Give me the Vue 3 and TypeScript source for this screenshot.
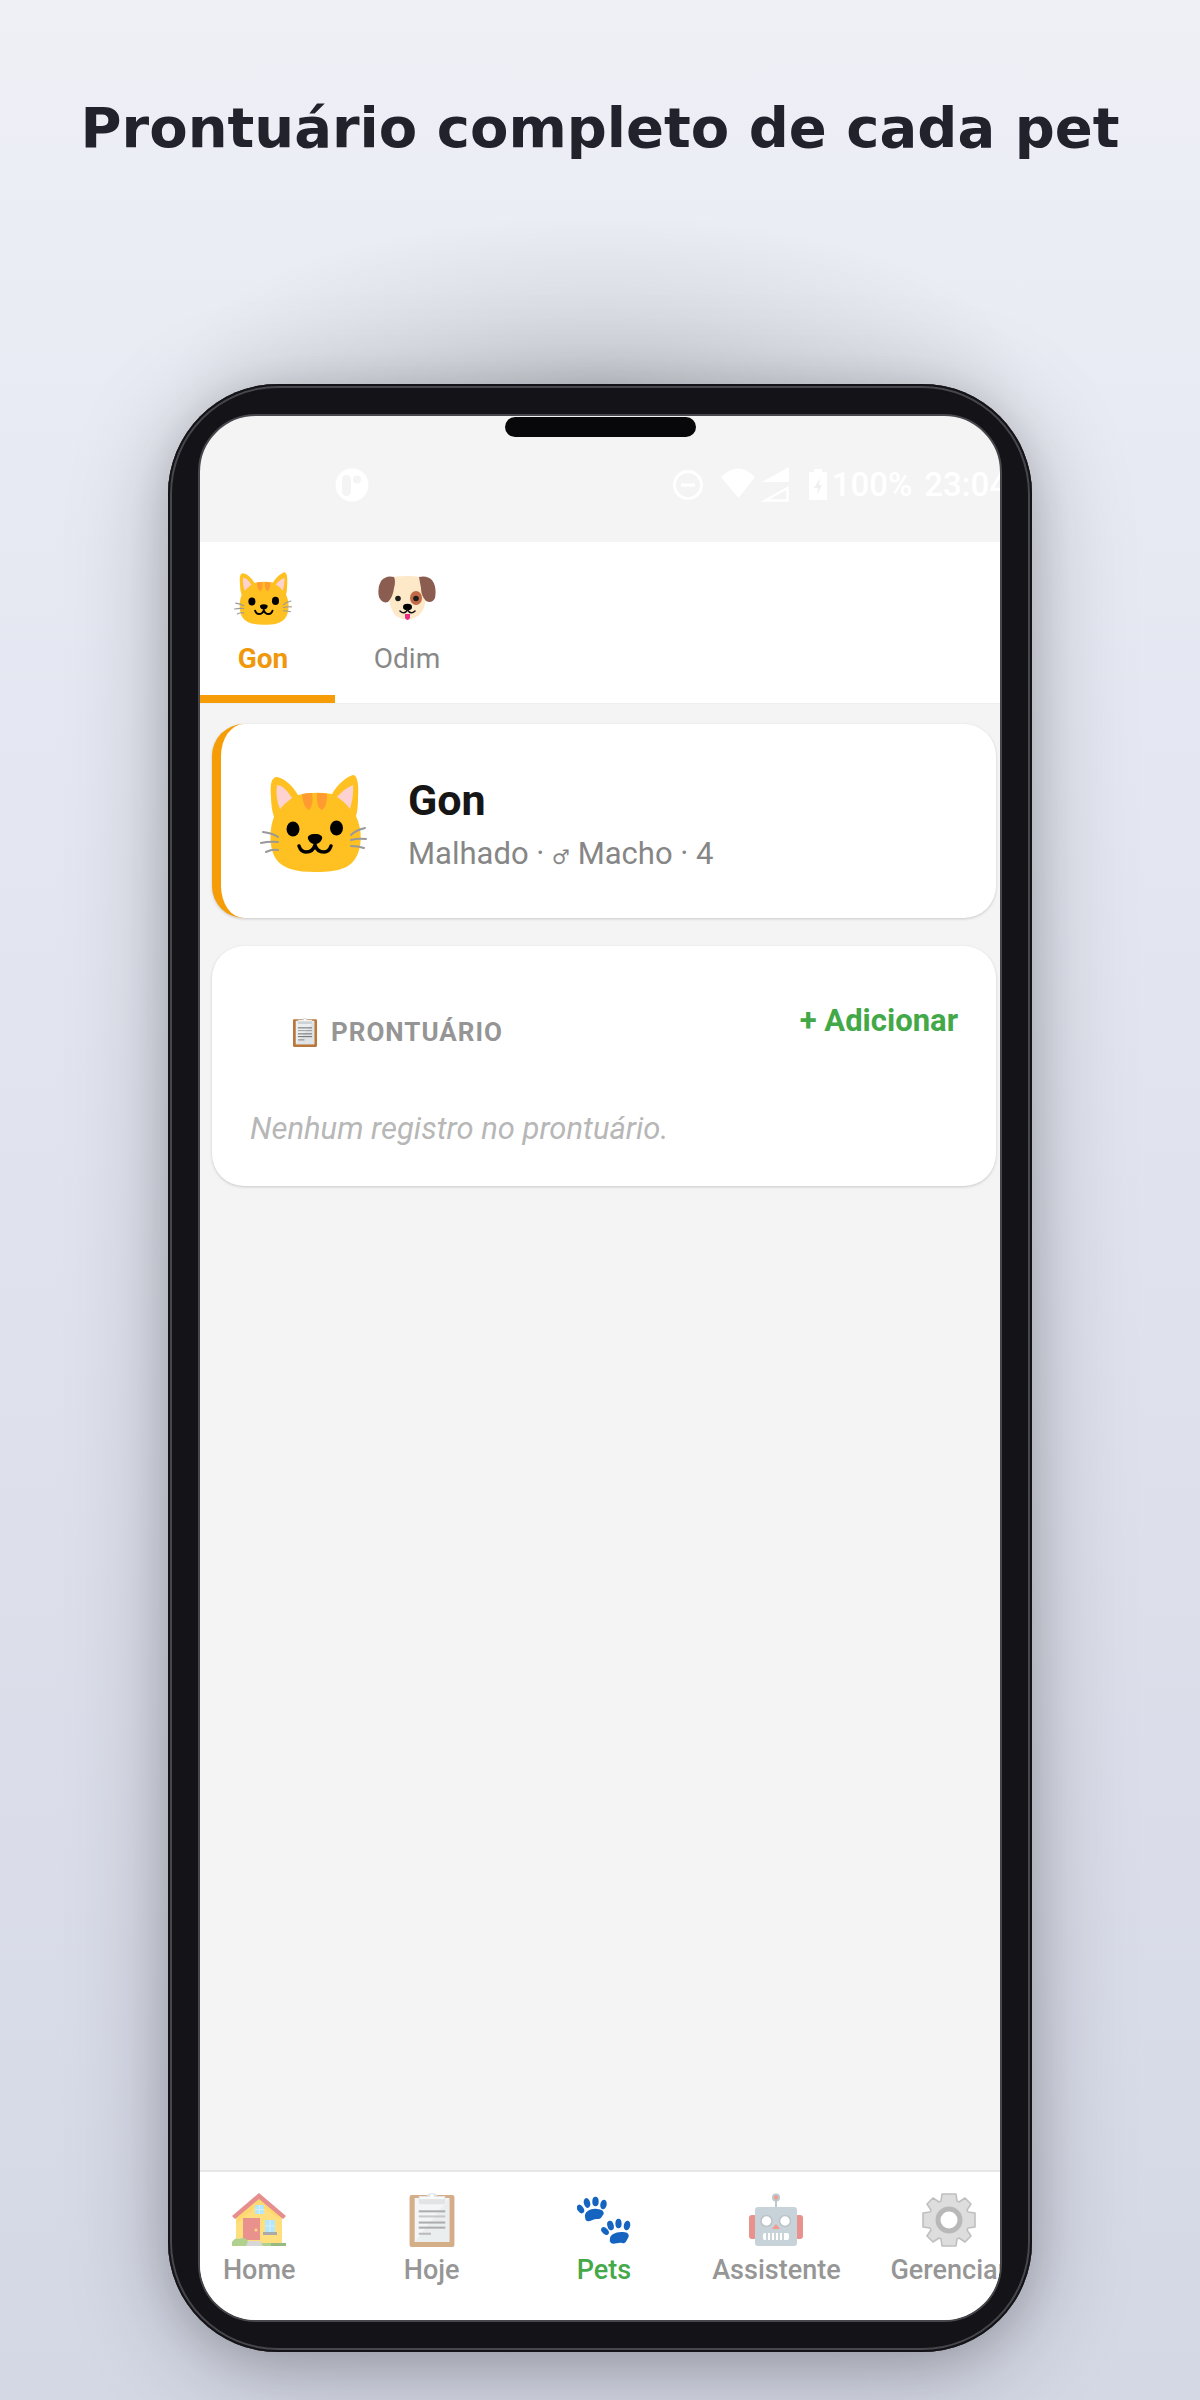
<script setup lang="ts">
import { ref } from 'vue'

interface Pet {
  name: string
  kind: 'cat' | 'dog'
}

interface NavItem {
  id: string
  label: string
}

const pets: Pet[] = [
  { name: 'Gon', kind: 'cat' },
  { name: 'Odim', kind: 'dog' },
]
const navItems: NavItem[] = [
  { id: 'home', label: 'Home' },
  { id: 'today', label: 'Hoje' },
  { id: 'pets', label: 'Pets' },
  { id: 'assistant', label: 'Assistente' },
  { id: 'manage', label: 'Gerenciar' },
]
const activePet = ref('Gon')
const activeNav = ref('pets')
</script>

<template>
  <svg class="symbols" aria-hidden="true">
    <symbol id="cat" viewBox="0 0 107 97">
      <path d="M11 22C10 10 11 2 17 2C24 3 33 11 38 20Q55 16 72 19C77 10 86 2 93 0C98 0 99 12 98 24Q98 35 96 41C103 56 102 74 95 84C88 95 73 97 55 97C37 97 23 94 16 84C9 74 9 54 14 42Q11 33 11 22Z" fill="#ffc022" />
      <path d="M17 10Q24 10 32 23Q25 28 20 34Q15 22 17 10ZM93 10Q85 13 77 22Q84 26 90 34Q94 20 93 10Z" fill="#ffd2d2" />
      <path d="M42 19Q47 18 52 18Q54 30 49 35Q43 33 42 19ZM57 18Q62 18 67 19Q67 32 62 35Q56 33 57 18Z" fill="#ff9b30" />
      <g fill="none" stroke="#999" stroke-width="2" stroke-linecap="round">
        <path d="M3 57Q12 58 18 62M1 68Q10 66 18 67M6 77Q12 74 18 75M105 53Q96 55 91 60M106 64Q98 63 91 65M104 73Q98 71 91 71" />
      </g>
      <ellipse cx="33" cy="54" rx="6.5" ry="7.5" />
      <ellipse cx="76.5" cy="53" rx="6.5" ry="7.5" />
      <path d="M55 59C60 59 63 61 62 64Q60 69 55 69Q50 69 48 64C47 61 50 59 55 59Z" />
      <path d="M39 71Q41 77 46 77Q53 77 55 70Q57 77 64 77Q69 77 71 71" fill="none" stroke="#000" stroke-width="3.5" stroke-linecap="round" />
    </symbol>
    <symbol id="dog" viewBox="0 0 58 45">
      <path d="M14 1Q29 -1 43 1L48 18Q48 34 40 40Q29 47 18 40Q11 32 11 20Z" fill="#fde9c8" />
      <path d="M16 1Q8 -1 3 5Q-1 12 1 21Q4 28 10 26Q15 21 16 12Q18 5 16 1ZM41 1Q49 -1 54 4Q59 11 57 22Q54 28 48 25Q43 20 43 12Q42 7 41 1Z" fill="#8b5d50" />
      <ellipse cx="38" cy="22" rx="6" ry="7" fill="#c26a45" />
      <circle cx="20" cy="22.5" r="2.8" fill="#1c1c1c" />
      <circle cx="38" cy="22.5" r="2.8" fill="#1c1c1c" />
      <path d="M27 38H32V42Q29.5 46 27 42Z" fill="#ec2a86" />
      <ellipse cx="29.5" cy="31" rx="4.5" ry="3.2" />
      <path d="M22 35Q26 39 29.5 34Q33 39 37 35" fill="none" stroke="#111" stroke-width="1.6" stroke-linecap="round" />
    </symbol>
    <symbol id="clipboard" viewBox="0 0 44 53">
      <rect x="0" y="2" width="44" height="51" rx="2" fill="#b9773b" />
      <path d="M5 5H39V48H5Z" fill="#eceff1" />
      <path d="M39 5V48H5Z" fill="#dfe3e6" />
      <path d="M9 3H17Q18 0 22 0Q26 0 27 3H35V9Q35 11 33 11H11Q9 11 9 9Z" fill="#cfd2d4" />
      <path d="M10 4H34V6H10Z" fill="#f6f7f8" />
      <circle cx="22" cy="3" r="2" fill="#fff" />
      <g fill="#777">
        <rect x="9" y="17" width="26" height="2" />
        <rect x="9" y="22" width="26" height="2" opacity=".6" />
        <rect x="9" y="28" width="26" height="2" />
        <rect x="9" y="33" width="26" height="2" />
        <rect x="9" y="39" width="12" height="2" opacity=".8" />
      </g>
    </symbol>
    <symbol id="home" viewBox="0 0 54 54">
      <path d="M4 24L27 4L50 24V51H4Z" fill="#ffca28" />
      <path d="M27 5L47 22V26L27 11L5 30V24Z" fill="#ffb300" opacity=".5" />
      <path d="M27 0L54 23L51 26L27 6L3 26L0 23Z" fill="#d64444" />
      <rect x="11" y="25" width="17" height="22" fill="#dc4a43" />
      <circle cx="24" cy="37" r="1.5" fill="#ffca28" />
      <path d="M23 12H32V21H23ZM33 27H43V40H33Z" fill="#81d4fa" />
      <path d="M27.5 12V21M23 16.5H32M38 27V40M33 33H43" stroke="#b5e7fc" stroke-width="1" />
      <rect x="31" y="39" width="14" height="3" fill="#6f7376" />
      <path d="M0 53V49Q3 44 7 46Q13 43 16 48V50H54V53Z" fill="#7cb342" />
      <path d="M39 50H54V53H39Z" fill="#558b2f" />
      <path d="M16 48H28L31 53H14Z" fill="#bdbdbd" />
    </symbol>
    <symbol id="pets" viewBox="0 0 54 54">
      <g fill="#1565c0">
        <path d="M8 24C7 18 15 15 20 16C26 16 28 20 26 22C24 24 25 26 20 26C16 26 14 29 10 28Q8 27 8 24Z" />
        <ellipse cx="3.5" cy="16" rx="3" ry="4.7" transform="rotate(-35 3.5 16)" />
        <ellipse cx="10" cy="10" rx="3.2" ry="5" transform="rotate(-15 10 10)" />
        <ellipse cx="18.5" cy="8.5" rx="3.2" ry="4.7" />
        <ellipse cx="26.5" cy="11.500" rx="3.2" ry="4.9" transform="rotate(10 26.5 11.5)" />
        <path d="M33 45C34 40 41 39 46 39C51 39 53 42 51 45C49 48 49 51 45 50C41 49 37 52 34 50Q32 48 33 45Z" />
        <ellipse cx="28" cy="38" rx="3" ry="4.5" transform="rotate(-45 28 38)" />
        <ellipse cx="33.5" cy="32.5" rx="3.2" ry="4.8" transform="rotate(-15 33.5 32.5)" />
        <ellipse cx="41.5" cy="30.5" rx="3.1" ry="4.7" />
        <ellipse cx="50" cy="32.5" rx="3.2" ry="4.9" transform="rotate(10 50 32.5)" />
      </g>
    </symbol>
    <symbol id="assistant" viewBox="0 0 54 54">
      <path d="M27 5V16" stroke="#90a4ae" stroke-width="2" />
      <circle cx="27" cy="4.5" r="4" fill="#90a4ae" />
      <circle cx="27" cy="4.5" r="2" fill="#f05545" />
      <rect x="0" y="22" width="8" height="24" rx="3" fill="#dc4a43" />
      <rect x="46" y="22" width="8" height="24" rx="3" fill="#dc4a43" />
      <rect x="6" y="14" width="42" height="39" rx="3" fill="#a4b7c0" />
      <circle cx="17.5" cy="28" r="5.5" fill="#fff" stroke="#8c9ea7" stroke-width="1.5" />
      <circle cx="36" cy="28" r="5.5" fill="#fff" stroke="#8c9ea7" stroke-width="1.5" />
      <path d="M27 31L31 36H23Z" fill="#f05545" />
      <rect x="14" y="40" width="26" height="7" rx="2" fill="#fff" />
      <path d="M18 40V47M22 40V47M26 40V47M30 40V47M34 40V47" stroke="#8c9ea7" stroke-width="1.5" />
    </symbol>
    <symbol id="manage" viewBox="0 0 54 54">
      <path
        d="M19 8L20 1H34L35 8L37 9L43 5L49 11L45 17L46 19L53 20V34L46 35L45 37L49 43L43 49L37 45L35 46L34 53H20L19 46L17 45L11 49L5 43L9 37L8 35L1 34V20L8 19L9 17L5 11L11 5L17 9Z"
        fill="#c8c8c8"
        stroke="#969696"
        stroke-width="1.6"
        stroke-linejoin="round"
      />
      <circle cx="27" cy="27" r="11" fill="#fff" stroke="#8a8a8a" stroke-width="5" />
    </symbol>
  </svg>

  <main class="page">
    <h1 class="headline">Prontuário completo de cada pet</h1>

    <section class="phone">
      <div class="screen">
        <span class="notch"></span>

        <div class="status">
          <svg class="status-app" width="34" height="34" viewBox="0 0 34 34">
            <circle cx="17" cy="17" r="16.5" fill="#fff" />
            <rect x="7" y="7" width="9" height="21" rx="4.5" fill="#f4f4f4" />
            <circle cx="22" cy="11.5" r="4" fill="#f4f4f4" />
          </svg>
          <svg width="30" height="30" viewBox="0 0 30 30">
            <circle cx="15" cy="15" r="13.5" fill="none" stroke="#fff" stroke-width="3" />
            <path d="M8 15H22" stroke="#fff" stroke-width="3" />
          </svg>
          <svg class="status-wifi" width="68" height="36" viewBox="0 0 68 36" fill="#fff">
            <path d="M0 10Q17 -7 34 10L17.5 31Z" />
            <path d="M41 15L68 0V15Z" />
            <path d="M44 33.5L66.5 21V33.5Z" fill="none" stroke="#fff" stroke-width="2.5" />
          </svg>
          <svg class="status-battery" width="18" height="32" viewBox="0 0 18 32">
            <path d="M5 0H13V3H18V31H0V3H5Z" fill="#fff" />
            <path d="M11 9L5 19H9L8 26L13 16H10Z" fill="#f0f0f0" />
          </svg>
          <span class="status-level">100%</span>
          <time>23:04</time>
        </div>

        <div class="tabs" role="tablist">
          <button
            v-for="pet in pets"
            :key="pet.name"
            type="button"
            role="tab"
            class="tab"
            :class="{ active: pet.name === activePet }"
            :aria-selected="pet.name === activePet"
            @click="activePet = pet.name"
          >
            <svg width="58" height="53"><use :href="'#' + pet.kind" /></svg>
            <span>{{ pet.name }}</span>
          </button>
        </div>

        <div class="content">
          <article class="card profile">
            <svg width="107" height="97"><use href="#cat" /></svg>
            <div>
              <h2 class="pet-name">Gon</h2>
              <p class="pet-info">Malhado · <span class="sex">♂</span> Macho · 4</p>
            </div>
          </article>

          <article class="card records">
            <header class="records-head">
              <h2 class="records-title">
                <svg width="24" height="29"><use href="#clipboard" /></svg>
                PRONTUÁRIO
              </h2>
              <button type="button" class="add">+ Adicionar</button>
            </header>
            <p class="empty">Nenhum registro no prontuário.</p>
          </article>
        </div>

        <nav class="nav">
          <div class="nav-items">
            <a
              v-for="item in navItems"
              :key="item.id"
              :href="'#/' + item.id"
              class="nav-item"
              :class="{ active: item.id === activeNav }"
              @click.prevent="activeNav = item.id"
            >
              <svg width="54" height="54"><use :href="item.id === 'today' ? '#clipboard' : '#' + item.id" /></svg>
              <span>{{ item.label }}</span>
            </a>
          </div>
        </nav>
      </div>
    </section>
  </main>
</template>

<style>
body {
  margin: 0;
}
</style>

<style scoped>
.symbols {
  position: absolute;
  width: 0;
  height: 0;
}
.page {
  position: relative;
  z-index: 0;
  box-sizing: border-box;
  min-height: 100vh;
  display: flex;
  flex-direction: column;
  padding: 96px 14% 48px;
  background: linear-gradient(#eff0f6, #e7eaf3 20%, #d4d8e5);
  font-family: Roboto, "Liberation Sans", sans-serif;
}
.headline {
  align-self: center;
  margin: 0 0 224px;
  font: 700 56px/64px "DejaVu Sans", sans-serif;
  color: #22222c;
  white-space: nowrap;
}
.phone {
  position: relative;
  flex: 1;
  display: flex;
  padding: 30px;
  border-radius: 110px;
  background: #141318;
  box-shadow:
    inset 0 0 0 2px #141318,
    inset 0 0 0 4px #46464c,
    0 16px 100px rgba(0, 0, 0, 0.26),
    0 8px 40px rgba(0, 0, 0, 0.12);
}
.phone::before {
  content: "";
  position: absolute;
  z-index: -1;
  inset: -170px 0 auto;
  height: 340px;
  background: radial-gradient(closest-side, rgba(0, 0, 0, 0.12), rgba(0, 0, 0, 0.06) 50%, transparent);
}
.screen {
  position: relative;
  flex: 1;
  min-width: 0;
  display: flex;
  flex-direction: column;
  overflow: hidden;
  border: 2px solid #46464c;
  border-radius: 58px;
  background: #f4f4f4;
}
.notch {
  position: absolute;
  top: 1px;
  left: 50%;
  width: 191px;
  height: 20px;
  margin-left: -95px;
  border-radius: 10px;
  background: #08080a;
}
.status {
  box-sizing: border-box;
  height: 126px;
  display: flex;
  align-items: center;
  padding: 12px 0 0 135px;
  margin-right: -8px;
  font-size: 33px;
  line-height: 36px;
  font-weight: 500;
  color: #fff;
}
.status svg {
  flex: none;
}
.status .status-app {
  margin-right: auto;
}
.status-wifi {
  margin: 0 20px 0 18px;
}
.status-battery {
  margin-right: 5px;
}
.status-level {
  margin-right: 12px;
}
.tabs {
  display: flex;
  height: 161px;
  background: #fff;
  border-bottom: 1px solid #efefef;
}
.tab {
  box-sizing: border-box;
  width: 144px;
  display: flex;
  flex-direction: column;
  align-items: center;
  gap: 18px;
  padding: 30px 0 0;
  border: 0;
  border-bottom: 8px solid transparent;
  background: none;
  font: 400 28px/32px Roboto, sans-serif;
  color: #888;
}
.tab:first-child {
  margin-left: -9px;
}
.tab.active {
  border-bottom-color: #f59c06;
  font-weight: 700;
  color: #f0980c;
}
.content {
  flex: 1;
  display: flex;
  flex-direction: column;
  gap: 28px;
  padding: 20px 4px 28px 12px;
}
.card {
  border-radius: 32px;
  background: #fff;
  box-shadow: 0 1px 3px rgba(0, 0, 0, 0.18);
}
.profile {
  display: flex;
  align-items: center;
  gap: 41px;
  padding: 50px 39px 46px;
  border-left: 9px solid #f59c06;
}
.pet-name {
  margin: 0 0 10px;
  font-size: 43px;
  line-height: 52px;
  color: #161616;
}
.pet-info {
  margin: 0;
  font-size: 31px;
  line-height: 36px;
  color: #868686;
}
.sex {
  font-family: "DejaVu Sans", sans-serif;
  font-size: 20px;
  line-height: 20px;
}
.records {
  padding: 57px 38px 39px;
}
.records-head {
  display: flex;
  justify-content: space-between;
  align-items: flex-start;
}
.records-title {
  display: flex;
  align-items: center;
  gap: 14px;
  margin: 13px 0 0 43px;
  font-size: 26px;
  line-height: 32px;
  letter-spacing: 1px;
  color: #959595;
}
.add {
  padding: 0;
  border: 0;
  background: none;
  font: 700 31px/36px Roboto, sans-serif;
  color: #43a847;
}
.empty {
  margin: 63px 0 0;
  font-size: 31px;
  line-height: 36px;
  font-style: italic;
  color: #b7b7b7;
}
.nav {
  border-top: 2px solid #e6e6e6;
  background: #fff;
}
.nav-items {
  display: flex;
  margin: 0 -35px 0 -27px;
  padding: 21px 0 34px;
}
.nav-item {
  flex: 1 1 0;
  min-width: 0;
  display: flex;
  flex-direction: column;
  align-items: center;
  gap: 7px;
  font-size: 27px;
  line-height: 32px;
  font-weight: 500;
  color: #969696;
  text-decoration: none;
}
.nav-item svg {
  opacity: 0.6;
}
.nav-item.active {
  color: #45a949;
}
.nav-item.active svg {
  opacity: 1;
}
</style>
